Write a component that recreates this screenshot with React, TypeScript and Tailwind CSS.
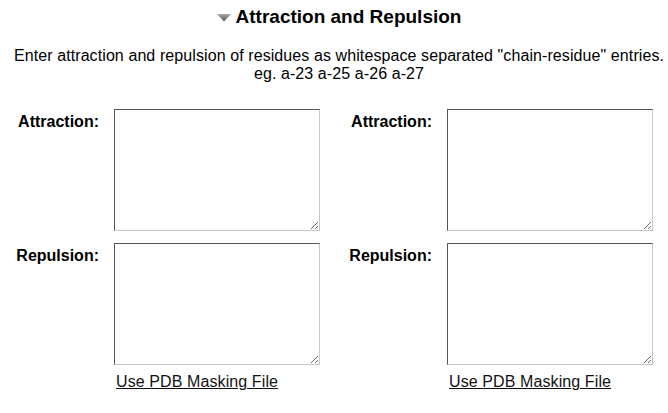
import React from "react";

function Field({ label }: { label: string }) {
  return (
    <div className="flex items-start">
      <div className="w-[99px] shrink-0 text-right font-bold text-[16px] leading-[18px] pt-[4px] text-black">
        {label}
      </div>
      <textarea className="ml-[15px] w-[206px] h-[122px] shrink-0 bg-white border border-solid border-t-[#555555] border-l-[#555555] border-r-[#c6c6c6] border-b-[#c6c6c6] outline-none" />
    </div>
  );
}

function Column() {
  return (
    <div className="w-[333px] shrink-0 flex flex-col">
      <Field label="Attraction:" />
      <div className="mt-[12px]">
        <Field label="Repulsion:" />
      </div>
      <a
        href="#"
        className="ml-[116px] mt-[8px] text-[16px] leading-[18.4px] tracking-[0.1px] text-[#111111] underline"
      >
        Use PDB Masking File
      </a>
    </div>
  );
}

export default function App() {
  return (
    <div
      className="w-full h-[413px] overflow-hidden bg-white text-black"
      style={{ fontFamily: '"Liberation Sans", Arial, sans-serif' }}
    >
      <div className="w-[678px]">
        <div className="pt-[6px] flex justify-center items-center h-[28px] box-border">
          <svg width="14" height="8" viewBox="0 0 14 8" className="mr-[5px] mt-[1px]">
            <defs>
              <linearGradient id="tri" x1="0" y1="0" x2="0" y2="1">
                <stop offset="0" stopColor="#a8a8a8" />
                <stop offset="1" stopColor="#555555" />
              </linearGradient>
            </defs>
            <polygon points="0,0 14,0 7,7.5" fill="url(#tri)" />
          </svg>
          <span className="font-bold text-[19px] leading-[22px]">Attraction and Repulsion</span>
        </div>
        <div className="mt-[18.7px] text-center text-[16px] leading-[18.4px] tracking-[0.09px]">
          Enter attraction and repulsion of residues as whitespace separated "chain-residue" entries.
          <br />
          eg. a-23 a-25 a-26 a-27
        </div>
        <div className="mt-[25.5px] flex">
          <Column />
          <Column />
        </div>
      </div>
    </div>
  );
}
